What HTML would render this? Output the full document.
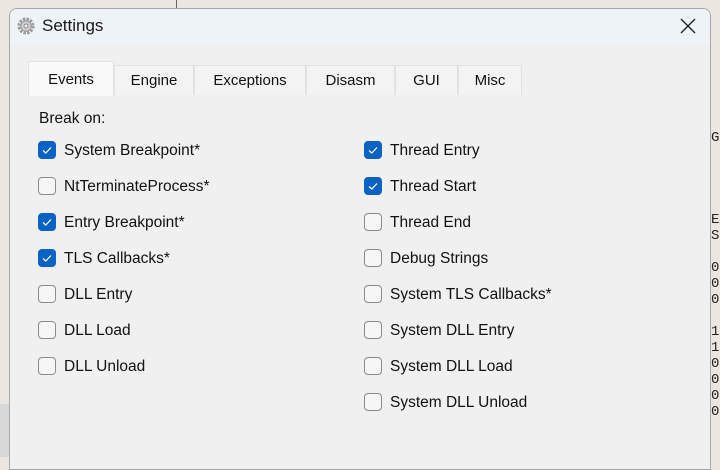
<!DOCTYPE html>
<html><head><style>
body{margin:0;width:720px;height:457px;overflow:hidden;background:#ece6e0;font-family:"Liberation Sans",sans-serif;position:relative}
.dlg{position:absolute;left:9px;top:8px;width:700px;height:460px;background:#f0f0f0;border:1px solid #a8a8a8;border-radius:8px 8px 0 0;overflow:hidden}
.title{height:36px;background:#eef3f8;position:relative}
.title span{position:absolute;left:32px;top:7px;font-size:17px;color:#1a1a1a}
.x{position:absolute;right:14px;top:9px}
.tab{position:absolute;top:56px;height:30px;background:#f3f3f3;border:1px solid #e2e2e2;border-bottom:none;font-size:15px;text-align:center;line-height:30px;color:#111;box-sizing:border-box}
.sel{top:52px;height:35px;background:#f9f9f9;line-height:36px}
.cb{position:absolute;width:18px;height:18px;border:1px solid #8a8a8a;border-radius:4px;background:#f6f6f6;box-sizing:border-box}
.on{background:#0a63c4;border-color:#0a63c4}
.lb{position:absolute;font-size:15.5px;color:#111}
</style></head><body>
<div style="position:absolute;left:176px;top:0;width:1px;height:8px;background:#666"></div>
<div style="position:absolute;left:0;top:404px;width:9px;height:53px;background:#d8d8d8"></div>
<div class="dlg">
<div class="title">
<svg style="position:absolute;left:6px;top:7px" width="20" height="20" viewBox="0 0 20 20"><circle cx="10" cy="10" r="7" fill="none" stroke="#9a9a9a" stroke-width="3" stroke-dasharray="2.4 1.3"/><circle cx="10" cy="10" r="5.2" fill="#d0d0d0" stroke="#999"/><circle cx="10" cy="10" r="2" fill="#eee" stroke="#888"/></svg>
<span>Settings</span>
<svg class="x" width="16" height="16" viewBox="0 0 16 16"><path d="M1 1L15 15M15 1L1 15" stroke="#222" stroke-width="1.4"/></svg>
</div>
<div class="tab" style="left:104px;width:80px">Engine</div>
<div class="tab" style="left:184px;width:112px">Exceptions</div>
<div class="tab" style="left:296px;width:89px">Disasm</div>
<div class="tab" style="left:385px;width:63px">GUI</div>
<div class="tab" style="left:448px;width:64px">Misc</div>
<div class="tab sel" style="left:18px;width:86px">Events</div>
<div class="lb" style="left:29px;top:101px">Break on:</div>
</div>
<div id="c"></div>
<script>
var L=[["System Breakpoint*",1],["NtTerminateProcess*",0],["Entry Breakpoint*",1],["TLS Callbacks*",1],["DLL Entry",0],["DLL Load",0],["DLL Unload",0]];
var R=[["Thread Entry",1],["Thread Start",1],["Thread End",0],["Debug Strings",0],["System TLS Callbacks*",0],["System DLL Entry",0],["System DLL Load",0],["System DLL Unload",0]];
var h="";
function add(a,x){a.forEach(function(e,i){var y=141+i*36;h+='<div class="cb'+(e[1]?' on':'')+'" style="left:'+x+'px;top:'+y+'px">'+(e[1]?'<svg width="16" height="16" viewBox="0 0 16 16"><path d="M4 8.5L6.8 11L12 5.5" fill="none" stroke="#fff" stroke-width="1.2"/></svg>':'')+'</div><div class="lb" style="left:'+(x+26)+'px;top:'+(y+1)+'px">'+e[0]+'</div>';});}
add(L,38);add(R,364);
document.getElementById("c").innerHTML=h;
</script>
<div style="position:absolute;left:711px;top:130px;font:14px 'Liberation Mono',monospace;line-height:16px;color:#222">G</div>
<div style="position:absolute;left:711px;top:212px;font:14px 'Liberation Mono',monospace;line-height:16px;color:#222">E<br>S<br><br>0<br>0<br>0<br><br>1<br>1<br>0<br>0<br>0<br>0</div>
</body></html>
